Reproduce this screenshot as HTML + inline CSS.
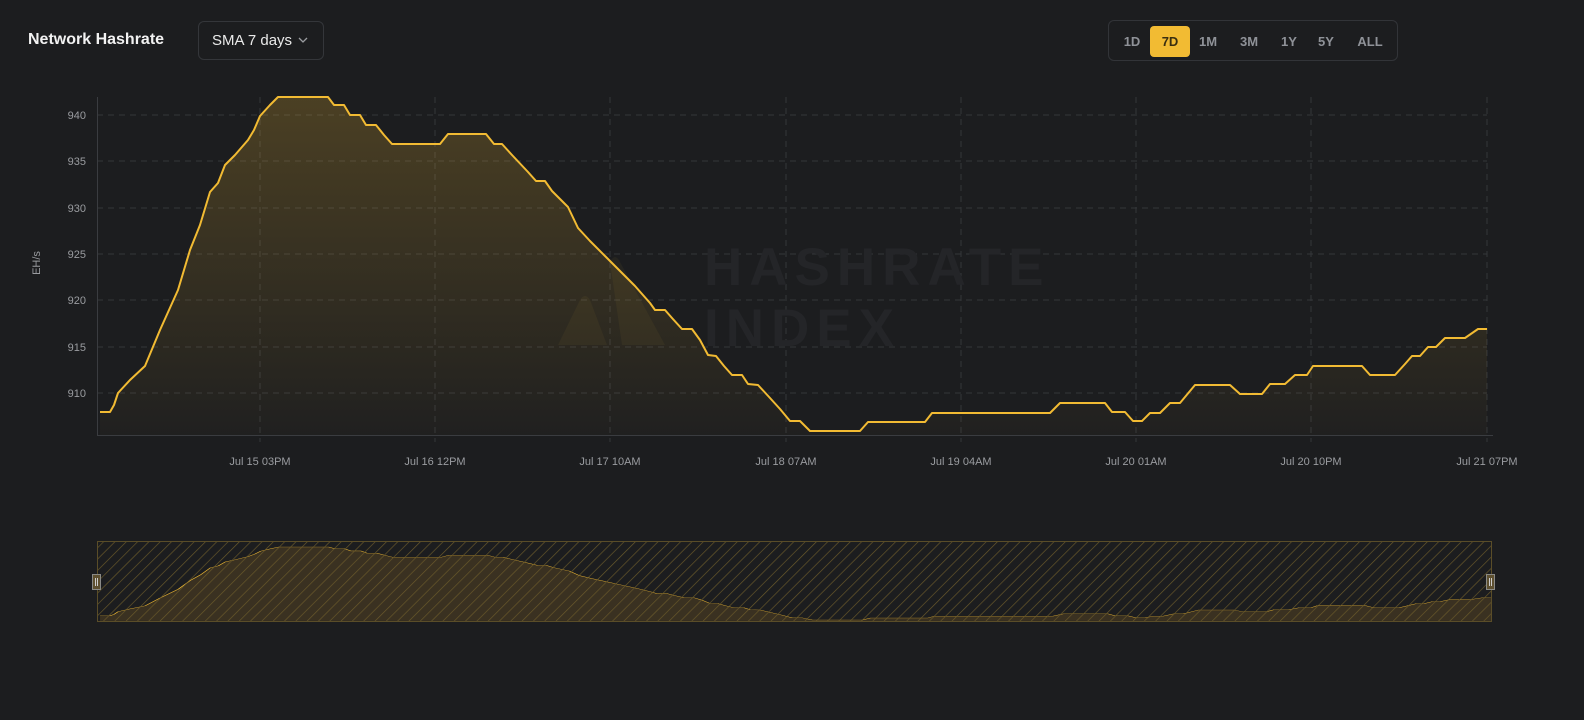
<!DOCTYPE html>
<html><head><meta charset="utf-8">
<style>
html,body{margin:0;padding:0;background:#1c1d1f;width:1584px;height:720px;overflow:hidden;font-family:"Liberation Sans",sans-serif}
.title{position:absolute;left:28px;top:31px;color:#f2f2f2;font-weight:bold;font-size:16px}
.sel{position:absolute;left:198px;top:21px;width:126px;height:39px;border:1px solid #34363a;border-radius:6px;box-sizing:border-box;color:#eaeaea;font-size:15px;line-height:37px;padding-left:13px}
.sel svg{position:absolute;right:15px;top:15px}
.tabs{position:absolute;left:1108px;top:20px;width:290px;height:41px;border:1px solid #323438;border-radius:6px;box-sizing:border-box}
.tab{position:absolute;top:5px;height:31px;line-height:31px;font-size:13px;font-weight:bold;color:#8f9298;text-align:center}
.tab.on{background:#f2bb33;color:#3a2e10;border-radius:4px}
</style></head><body>
<div class="title">Network Hashrate</div>
<div class="sel">SMA 7 days<svg width="10" height="6" viewBox="0 0 10 6"><path d="M1 1l4 4 4-4" stroke="#9a9ca0" stroke-width="1.3" fill="none"/></svg></div>
<div class="tabs">
<div class="tab" style="left:12px;width:22px">1D</div>
<div class="tab on" style="left:41px;width:40px">7D</div>
<div class="tab" style="left:88px;width:22px">1M</div>
<div class="tab" style="left:128px;width:24px">3M</div>
<div class="tab" style="left:169px;width:22px">1Y</div>
<div class="tab" style="left:206px;width:22px">5Y</div>
<div class="tab" style="left:246px;width:30px">ALL</div>
</div>
<svg width="1584" height="720" style="position:absolute;left:0;top:0">
<defs>
<linearGradient id="g" x1="0" y1="0" x2="0" y2="1"><stop offset="0" stop-color="#f2bb33" stop-opacity="0.22"/><stop offset="1" stop-color="#f2bb33" stop-opacity="0.02"/></linearGradient>
<pattern id="h" width="8" height="8" patternUnits="userSpaceOnUse" patternTransform="rotate(45)"><line x1="0" y1="0" x2="0" y2="8" stroke="#6b5a2a" stroke-width="1.3"/></pattern>
<path id="ln" d="M100,412 L110,412 114,405 118,393 130,380 145,366 160,330 178,290 190,250 200,225 210,192 218,183 225,165 235,155 248,140 254,130 260,116 270,105 278,97 328,97 334,105 344,105 350,115 360,115 366,125 376,125 384,135 392,144 440,144 448,134 486,134 494,144 502,144 512,155 528,172 536,181 545,181 552,191 568,207 578,228 590,241 605,256 620,271 635,286 650,303 655,310 665,310 672,318 682,329 692,329 700,340 708,355 716,356 724,366 732,375 742,375 748,384 758,385 770,398 780,409 790,421 800,421 810,431 860,431 868,422 925,422 932,413 1050,413 1060,403 1105,403 1112,412 1125,412 1133,421 1142,421 1150,413 1160,413 1170,403 1180,403 1195,385 1230,385 1240,394 1262,394 1270,384 1285,384 1295,375 1307,375 1313,366 1362,366 1370,375 1395,375 1405,364 1412,356 1420,356 1428,347 1436,347 1445,338 1465,338 1478,329 1487,329"/>
<path id="fl" d="M100,412 L110,412 114,405 118,393 130,380 145,366 160,330 178,290 190,250 200,225 210,192 218,183 225,165 235,155 248,140 254,130 260,116 270,105 278,97 328,97 334,105 344,105 350,115 360,115 366,125 376,125 384,135 392,144 440,144 448,134 486,134 494,144 502,144 512,155 528,172 536,181 545,181 552,191 568,207 578,228 590,241 605,256 620,271 635,286 650,303 655,310 665,310 672,318 682,329 692,329 700,340 708,355 716,356 724,366 732,375 742,375 748,384 758,385 770,398 780,409 790,421 800,421 810,431 860,431 868,422 925,422 932,413 1050,413 1060,403 1105,403 1112,412 1125,412 1133,421 1142,421 1150,413 1160,413 1170,403 1180,403 1195,385 1230,385 1240,394 1262,394 1270,384 1285,384 1295,375 1307,375 1313,366 1362,366 1370,375 1395,375 1405,364 1412,356 1420,356 1428,347 1436,347 1445,338 1465,338 1478,329 1487,329 L1487,435 L100,435 Z"/>
</defs>
<g stroke="#34363a" stroke-dasharray="6,5" stroke-width="1">
<line x1="97" x2="1487" y1="115" y2="115"/><line x1="97" x2="1487" y1="161" y2="161"/><line x1="97" x2="1487" y1="208" y2="208"/><line x1="97" x2="1487" y1="254" y2="254"/><line x1="97" x2="1487" y1="300" y2="300"/><line x1="97" x2="1487" y1="347" y2="347"/><line x1="97" x2="1487" y1="393" y2="393"/>
<line x1="260" x2="260" y1="97" y2="442"/><line x1="435" x2="435" y1="97" y2="442"/><line x1="610" x2="610" y1="97" y2="442"/><line x1="786" x2="786" y1="97" y2="442"/><line x1="961" x2="961" y1="97" y2="442"/><line x1="1136" x2="1136" y1="97" y2="442"/><line x1="1311" x2="1311" y1="97" y2="442"/><line x1="1487" x2="1487" y1="97" y2="442"/>
</g>
<line x1="97.5" y1="97" x2="97.5" y2="435" stroke="#3a3c40"/>
<line x1="97" y1="435.5" x2="1493" y2="435.5" stroke="#3a3c40"/>
<g font-family="Liberation Sans,sans-serif" font-weight="bold" font-size="53" fill="#242528" letter-spacing="7">
<text x="704" y="285">HASHRATE</text><text x="704" y="346">INDEX</text>
</g>
<use href="#fl" fill="url(#g)"/>
<g fill="#f2bb33" fill-opacity="0.05">
<path d="M558,345 L580,300 Q585,292 590,300 L607,345 Z"/>
<path d="M610,262 Q615,252 620,262 L665,345 L622,345 Z"/>
</g>
<use href="#ln" fill="none" stroke="#f2bb33" stroke-width="2" stroke-linejoin="round"/>
<g font-size="11" fill="#9a9ca0" font-family="Liberation Sans,sans-serif" text-anchor="end">
<text x="86" y="119">940</text><text x="86" y="165">935</text><text x="86" y="212">930</text><text x="86" y="258">925</text><text x="86" y="304">920</text><text x="86" y="351">915</text><text x="86" y="397">910</text>
</g>
<text transform="translate(40,263) rotate(-90)" font-size="11" fill="#9a9ca0" text-anchor="middle">EH/s</text>
<g font-size="11" fill="#9a9ca0" text-anchor="middle">
<text x="260" y="465">Jul 15 03PM</text><text x="435" y="465">Jul 16 12PM</text><text x="610" y="465">Jul 17 10AM</text><text x="786" y="465">Jul 18 07AM</text><text x="961" y="465">Jul 19 04AM</text><text x="1136" y="465">Jul 20 01AM</text><text x="1311" y="465">Jul 20 10PM</text><text x="1487" y="465">Jul 21 07PM</text>
</g>
<g transform="translate(-0.3,525.8) scale(1.0032,0.2186)">
<use href="#fl" fill="#3a3121"/>
<use href="#ln" fill="none" stroke="#f2bb33" stroke-width="1.2" vector-effect="non-scaling-stroke"/>
</g>
<rect x="97.5" y="541.5" width="1394" height="80" fill="url(#h)" stroke="#5a4d28"/>
<rect x="92.5" y="574.5" width="8" height="15" fill="#5e5030" stroke="#8a8a86"/>
<line x1="95.5" y1="578" x2="95.5" y2="586" stroke="#ccc"/><line x1="97.5" y1="578" x2="97.5" y2="586" stroke="#ccc"/>
<rect x="1486.5" y="574.5" width="8" height="15" fill="#5e5030" stroke="#8a8a86"/>
<line x1="1489.5" y1="578" x2="1489.5" y2="586" stroke="#ccc"/><line x1="1491.5" y1="578" x2="1491.5" y2="586" stroke="#ccc"/>
</svg>
</body></html>
